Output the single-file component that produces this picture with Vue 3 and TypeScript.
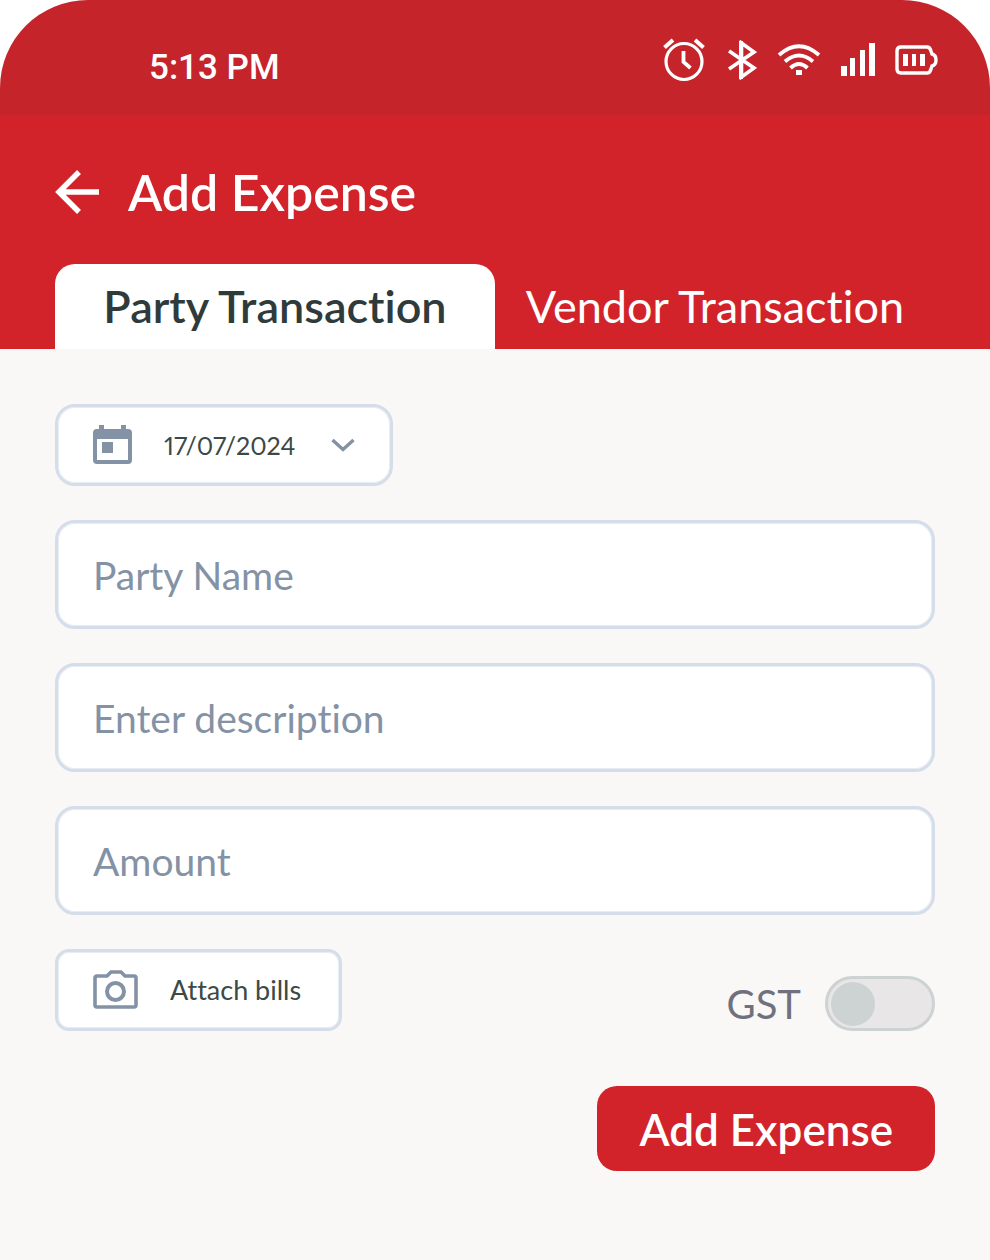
<script setup lang="ts">
import { ref } from 'vue'

type Tab = 'party' | 'vendor'

const tabs: { id: Tab; label: string }[] = [
  { id: 'party', label: 'Party Transaction' },
  { id: 'vendor', label: 'Vendor Transaction' },
]
const activeTab = ref<Tab>('party')
const date = ref('17/07/2024')
const name = ref('')
const description = ref('')
const amount = ref('')
const gst = ref(false)
</script>

<template>
  <div class="screen">
    <div class="status">
      <span class="clock">5:13 PM</span>
      <div class="status-icons">
        <svg width="42" height="44" viewBox="0 0 42 44" aria-hidden="true">
          <g fill="none" stroke="currentColor" stroke-width="3.2">
            <circle cx="21" cy="23.500" r="18" />
            <path d="M20.500 13v11l7 6" stroke-width="3.800" />
            <path d="M1.500 9.500L10 2M32 2l8.500 7.500" stroke-width="4" />
          </g>
        </svg>
        <svg class="bluetooth" width="30" height="40" viewBox="0 0 30 40" aria-hidden="true">
          <path d="M2 11l25 17-12.500 9V3L27 12 2 29" fill="none" stroke="currentColor" stroke-width="3.600" />
          <path d="M14 1v38" stroke="currentColor" stroke-width="4" />
        </svg>
        <svg class="wifi" width="44" height="32" viewBox="0 0 44 32" aria-hidden="true">
          <path d="M2 11Q22-6.500 42 11M8 17.500Q22 5.500 36 17.500M13.500 24Q22 16 30.500 24" fill="none" stroke="currentColor" stroke-width="3.800" />
          <path d="M19 26h6v5h-6z" fill="currentColor" />
        </svg>
        <svg class="signal" width="34" height="34" viewBox="0 0 34 34" aria-hidden="true">
          <path d="M0 23h6v10H0zM9 15h5v18H9zM19 7h5v26h-5zM28 0h6v33h-6z" fill="currentColor" />
        </svg>
        <svg class="battery" width="43" height="30" viewBox="0 0 43 30" aria-hidden="true">
          <path d="M6 2h26q3 0 4 4l1 3q4 1 4 6t-4 6l-1 3q-1 4-4 4H6q-4 0-4-4V6q0-4 4-4z" fill="none" stroke="currentColor" stroke-width="3.400" />
          <path d="M8 9h5v12H8zM17 9h4v12h-4zM25 9h5v12h-5z" fill="currentColor" />
        </svg>
      </div>
    </div>

    <header class="header">
      <div class="title-row">
        <button class="back" type="button" aria-label="Back">
          <svg width="45" height="44" viewBox="0 0 45 44" aria-hidden="true">
            <path d="M24 2L4 22l20 20M4 22h40" fill="none" stroke="currentColor" stroke-width="5.500" />
          </svg>
        </button>
        <h1>Add Expense</h1>
      </div>
      <div class="tabs" role="tablist">
        <button
          v-for="tab in tabs"
          :key="tab.id"
          type="button"
          role="tab"
          class="tab"
          :class="{ active: activeTab === tab.id }"
          :aria-selected="activeTab === tab.id"
          @click="activeTab = tab.id"
        >{{ tab.label }}</button>
      </div>
    </header>

    <form class="form" @submit.prevent>
      <button class="chip date" type="button" aria-haspopup="dialog">
        <svg width="39" height="40" viewBox="0 0 39 40" aria-hidden="true">
          <path fill="currentColor" fill-rule="evenodd" d="M6 0h5v4h17V0h5v4h2q4 0 4 4v27q0 4-4 4H4q-4 0-4-4V8q0-4 4-4h2zM4 14v21h31V14z" />
          <path fill="currentColor" d="M9 17h11v11H9z" />
        </svg>
        <span>{{ date }}</span>
        <svg class="chevron" width="24" height="14" viewBox="0 0 24 14" aria-hidden="true">
          <path d="M1.500 2L12 11.500 22.500 2" fill="none" stroke="currentColor" stroke-width="3.400" />
        </svg>
      </button>

      <input v-model="name" class="field" type="text" placeholder="Party Name" aria-label="Party Name" />
      <input v-model="description" class="field" type="text" placeholder="Enter description" aria-label="Enter description" />
      <input v-model="amount" class="field" type="text" inputmode="decimal" placeholder="Amount" aria-label="Amount" />

      <div class="extras">
        <button class="chip attach" type="button">
          <svg width="45" height="40" viewBox="0 0 45 40" aria-hidden="true">
            <path d="M4 6h10l4-4h10l4 4h9q2 0 2 2v27q0 2-2 2H4q-2 0-2-2V8q0-2 2-2z" fill="none" stroke="currentColor" stroke-width="3.600" />
            <circle cx="22.500" cy="21.500" r="8.500" fill="none" stroke="currentColor" stroke-width="4" />
          </svg>
          <span>Attach bills</span>
        </button>
        <div class="gst">
          <label for="gst">GST</label>
          <input id="gst" v-model="gst" class="switch" type="checkbox" role="switch" />
        </div>
      </div>

      <button class="submit" type="submit">Add Expense</button>
    </form>
  </div>
</template>

<style>
body {
  margin: 0;
  background: #fff;
}
</style>

<style scoped>
.screen {
  display: flex;
  flex-direction: column;
  min-height: 100vh;
  box-sizing: border-box;
  overflow: hidden;
  border-radius: 88px 88px 0 0;
  background: #f9f8f6;
  font-family: Lato, "Open Sans", sans-serif;
  font-variant-ligatures: none;
  color: #2f3b3b;
}

button,
input {
  box-sizing: border-box;
  margin: 0;
  font-family: inherit;
  font-variant-ligatures: none;
}

button {
  border: 0;
  cursor: pointer;
}

svg {
  display: block;
  flex: none;
}

.status {
  display: flex;
  align-items: center;
  justify-content: space-between;
  box-sizing: border-box;
  height: 115px;
  padding: 8px 52px 0 149px;
  background: #c5242a;
  color: #fff;
}

.clock {
  padding-top: 12px;
  font: 500 35px/44px Roboto, sans-serif;
}

.status-icons {
  display: flex;
  align-items: center;
  gap: 20px;
  padding-bottom: 4px;
}

.bluetooth {
  margin-left: 2px;
}

.header {
  padding: 48px 55px 0;
  background: #d2232a;
  color: #fff;
}

.title-row {
  display: flex;
  align-items: center;
  gap: 28px;
  height: 58px;
}

.back {
  padding: 0;
  background: none;
  color: inherit;
}

h1 {
  margin: 0;
  font-size: 50px;
  font-weight: 600;
  line-height: 58px;
}

.tabs {
  display: grid;
  grid-template-columns: 1fr 1fr;
  margin-top: 43px;
}

.tab {
  height: 85px;
  padding: 0 0 2px;
  border-radius: 20px 20px 0 0;
  background: none;
  color: #fff;
  font-size: 45px;
  line-height: 52px;
  white-space: nowrap;
}

.tab.active {
  background: #fff;
  color: #2f3b3b;
  font-weight: 600;
}

.form {
  display: flex;
  flex-direction: column;
  gap: 34px;
  padding: 55px;
}

.chip,
.field {
  border: 3px solid #d5ddea;
  background: #fff;
  box-shadow: inset 0 0 0 1px #e8edf4;
}

.chip {
  display: flex;
  align-items: center;
  gap: 32px;
  height: 82px;
  padding: 0 35px;
  color: #8492a6;
  font-size: 27px;
  line-height: 34px;
}

.chip span {
  color: #3b4947;
}

.date {
  align-self: flex-start;
  border-radius: 20px;
  font-size: 25px;
  font-variant-numeric: proportional-nums;
}

.chevron {
  margin-left: 4px;
}

.attach {
  padding-right: 38px;
  border-radius: 14px;
}

.field {
  width: 100%;
  height: 109px;
  padding: 0 35px;
  border-radius: 20px;
  color: #2f3b3b;
  font-size: 39px;
  line-height: 46px;
}

.field::placeholder {
  color: #8492a6;
  opacity: 1;
}

.extras {
  display: flex;
  align-items: flex-end;
  justify-content: space-between;
}

.gst {
  display: flex;
  align-items: center;
  gap: 24px;
  color: #6f727e;
  font-size: 40px;
  line-height: 46px;
}

.switch {
  display: flex;
  align-items: center;
  width: 110px;
  height: 55px;
  padding: 0 3px;
  border: 3px solid #cdd2d3;
  border-radius: 28px;
  appearance: none;
  background: #e8e6e7;
  cursor: pointer;
}

.switch::before {
  content: "";
  width: 44px;
  height: 44px;
  border-radius: 50%;
  background: #cdd2d3;
}

.switch:checked {
  justify-content: flex-end;
}

.submit {
  align-self: flex-end;
  height: 85px;
  margin-top: 21px;
  padding: 0 42px;
  border-radius: 20px;
  background: #d2232a;
  color: #fff;
  font-size: 44px;
  font-weight: 600;
  line-height: 52px;
}
</style>
